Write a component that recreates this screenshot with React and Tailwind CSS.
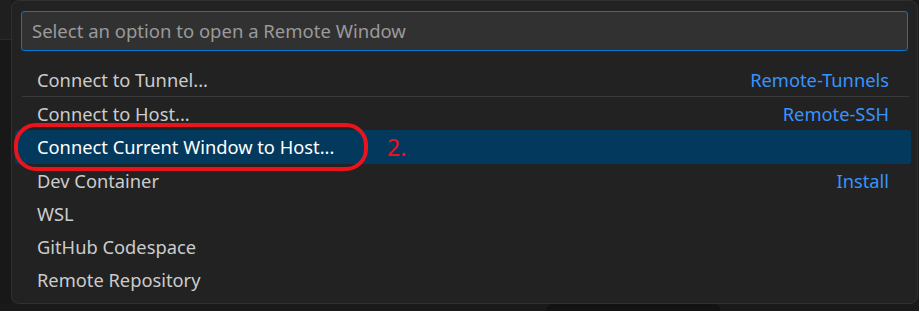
import React from 'react';

const items = [
  { label: 'Connect to Tunnel...', desc: 'Remote-Tunnels', separator: true },
  { label: 'Connect to Host...', desc: 'Remote-SSH' },
  { label: 'Connect Current Window to Host...', selected: true },
  { label: 'Dev Container', desc: 'Install' },
  { label: 'WSL' },
  { label: 'GitHub Codespace' },
  { label: 'Remote Repository' },
];

const App = () => {
  return (
    <div
      className="w-[919px] h-[311px] bg-[#1a1a1a] flex flex-col overflow-hidden"
      style={{ fontFamily: '"Noto Sans", "Open Sans", sans-serif' }}
    >
      <div className="flex">
        <div className="w-[11px] flex flex-col">
          <div className="h-[40px] bg-[#1f1f1f] border-b border-[#2a2a2a]"></div>
          <div className="flex-1 bg-[#181818]"></div>
        </div>
        <div className="w-[907px] h-[304px] bg-[#222222] border border-[#303030] rounded-lg pt-[10px]">
          <div className="mx-[9px] h-[40px] bg-[#313131] border border-[#0078d4] rounded-[3px] flex items-center pl-[10px]">
            <span className="text-[18.5px] text-[#9a9a9a]">Select an option to open a Remote Window</span>
          </div>
          <div className="mt-[12px] ml-[3px] mr-[6px]">
            {items.map((item) => (
              <div key={item.label} className="relative">
                <div
                  className={
                    item.selected
                      ? 'h-[34px] flex items-center justify-between pl-[22px] pr-[22px] bg-[#04395e] rounded-[3px] text-white'
                      : 'h-[33px] flex items-center justify-between pl-[22px] pr-[22px] text-[#cccccc]'
                  }
                >
                  <span className="text-[18.3px]">{item.label}</span>
                  {item.desc && <span className="text-[18.3px] text-[#3794ff]">{item.desc}</span>}
                </div>
                {item.selected && (
                  <>
                    <div className="absolute left-[-1px] top-[-7px] w-[354px] h-[48px] border-[4px] border-[#e8151f] rounded-[22px]"></div>
                    <span className="absolute left-[372px] top-[0px] text-[23px] text-[#e8151f]">2.</span>
                  </>
                )}
                {item.separator && <div className="ml-[7px] mr-[2px] h-px bg-[#3a3a3a]"></div>}
              </div>
            ))}
          </div>
        </div>
      </div>
      <div className="flex-1 flex">
        <div className="ml-[546px] w-[174px] bg-[#131313] rounded-t-md"></div>
      </div>
    </div>
  );
};

export default App;
